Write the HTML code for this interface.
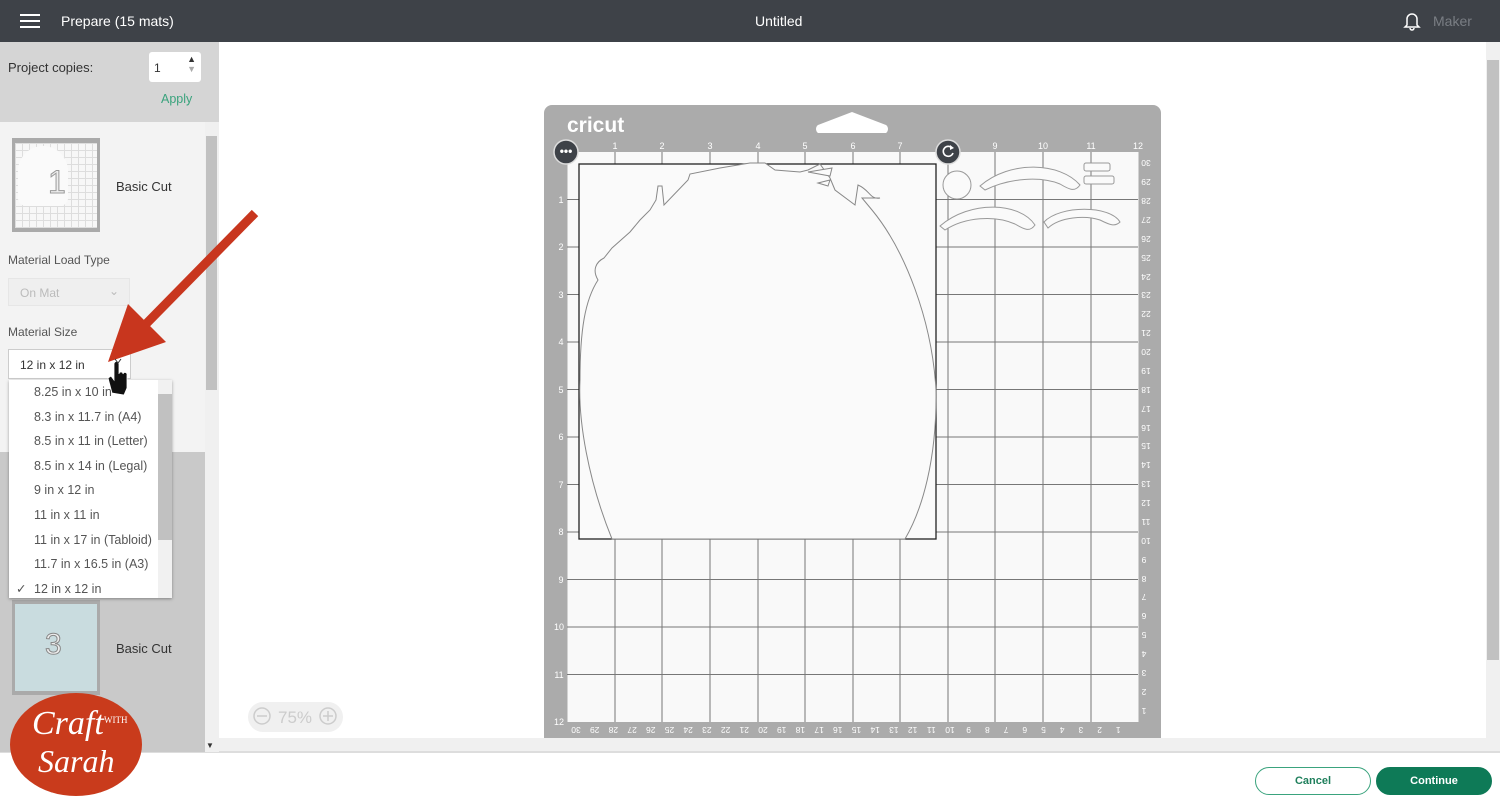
<!DOCTYPE html>
<html><head><meta charset="utf-8"><style>
*{margin:0;padding:0;box-sizing:border-box}
body{width:1500px;height:806px;overflow:hidden;font-family:"Liberation Sans",sans-serif;background:#fff;position:relative}
.top{position:absolute;left:0;top:0;width:1500px;height:42px;background:#3e4248;color:#fff}
.top .t{position:absolute;top:13px;font-size:14px}
.side{position:absolute;left:0;top:42px;width:219px;height:710px;background:#c9c9c9}
.abs{position:absolute}
.dd div{height:24.6px;line-height:24.6px;padding-left:25px;font-size:12.5px;color:#555}
.btn{position:absolute;top:767px;height:28px;border-radius:14px;font-size:11px;font-weight:bold;text-align:center;line-height:26px}
</style></head><body>
<div class="top">
 <div class="abs" style="left:20px;top:14px;width:20px;height:2px;background:#fff"></div>
 <div class="abs" style="left:20px;top:20px;width:20px;height:2px;background:#fff"></div>
 <div class="abs" style="left:20px;top:26px;width:20px;height:2px;background:#fff"></div>
 <div class="t" style="left:61px">Prepare (15 mats)</div>
 <div class="t" style="left:755px">Untitled</div>
 <svg class="abs" style="left:1403px;top:11px" width="18" height="20" viewBox="0 0 18 20"><path d="M4 14 V8 a5 5 0 0 1 10 0 V14 L16 16 H2 Z M7 17 a2 2 0 0 0 4 0" fill="none" stroke="#fff" stroke-width="1.5"/></svg>
 <div class="t" style="left:1433px;color:#7a7e84">Maker</div>
</div>
<div class="side">
 <div class="abs" style="left:0;top:0;width:219px;height:80px;background:#d5d5d5"></div>
 <div class="abs" style="left:8px;top:18px;font-size:13px;color:#333">Project copies:</div>
 <div class="abs" style="left:149px;top:10px;width:52px;height:30px;background:#fff;border-radius:3px;font-size:12px;padding:9px 0 0 5px;color:#333">1<span style="position:absolute;right:5px;top:2px;font-size:9px">▲<br><span style="color:#aaa">▼</span></span></div>
 <div class="abs" style="left:161px;top:50px;font-size:12.5px;color:#3aa37d">Apply</div>
 <div class="abs" style="left:0;top:80px;width:205px;height:330px;background:#f3f3f3"></div>
 <div class="abs" style="left:205px;top:80px;width:14px;height:630px;background:#f0f0f0"></div>
 <div class="abs" style="left:206px;top:94px;width:11px;height:254px;background:#c1c1c1"></div>
 <div class="abs" style="left:12px;top:96px;width:88px;height:94px;background:#aaa"></div>
 <div class="abs" style="left:15px;top:101px;width:82px;height:85px;background:#f7f7f7;background-image:linear-gradient(#ddd 1px,transparent 1px),linear-gradient(90deg,#ddd 1px,transparent 1px);background-size:7px 7px"></div>
 <div class="abs" style="left:18px;top:104px;width:50px;height:60px;background:#fafafa;border-radius:25px 25px 8px 8px"></div>
 <div class="abs" style="left:48px;top:122px;font-size:32px;color:#eee;-webkit-text-stroke:1px #999">1</div>
 <div class="abs" style="left:116px;top:137px;font-size:13px;color:#333">Basic Cut</div>
 <div class="abs" style="left:8px;top:211px;font-size:12px;color:#555">Material Load Type</div>
 <div class="abs" style="left:8px;top:236px;width:122px;height:28px;background:#efefef;border:1px solid #e6e6e6;font-size:12px;color:#bbb;padding:7px 0 0 11px">On Mat<span style="position:absolute;right:10px;top:5px">⌄</span></div>
 <div class="abs" style="left:8px;top:283px;font-size:12px;color:#555">Material Size</div>
 <div class="abs" style="left:8px;top:307px;width:123px;height:30px;background:#fff;border:1px solid #ccc;font-size:12px;color:#333;padding:8px 0 0 11px">12 in x 12 in</div>
 <div class="abs" style="left:12px;top:558px;width:88px;height:95px;background:#aaa"></div>
 <div class="abs" style="left:15px;top:562px;width:82px;height:87px;background:#c9dcdf"></div>
 <div class="abs" style="left:45px;top:586px;font-size:30px;color:#eee;-webkit-text-stroke:1px #888">3</div>
 <div class="abs" style="left:116px;top:599px;font-size:13px;color:#333">Basic Cut</div>
 <div class="abs" style="left:156px;top:469px;font-size:13px;color:#333">t</div>
 <div class="abs" style="left:206px;top:699px;font-size:8px;color:#333">▼</div>
</div>
<div class="abs dd" style="left:9px;top:380px;width:163px;height:218px;background:#fff;box-shadow:0 1px 3px rgba(0,0,0,.35);overflow:hidden">
 <div>8.25 in x 10 in</div><div>8.3 in x 11.7 in (A4)</div><div>8.5 in x 11 in (Letter)</div><div>8.5 in x 14 in (Legal)</div><div>9 in x 12 in</div><div>11 in x 11 in</div><div>11 in x 17 in (Tabloid)</div><div>11.7 in x 16.5 in (A3)</div><div style="position:relative"><span style="position:absolute;left:7px">✓</span>12 in x 12 in</div>
 <div class="abs" style="left:149px;top:0;width:14px;height:218px;background:#f1f1f1"></div>
 <div class="abs" style="left:149px;top:14px;width:12px;height:146px;background:#c1c1c1"></div>
</div>
<!-- canvas -->
<div class="abs" style="left:219px;top:42px;width:1267px;height:696px;background:#fff"></div>
<svg class="abs" style="left:0;top:0" width="1500" height="806" viewBox="0 0 1500 806">
 <path d="M544 738 V113 a8 8 0 0 1 8 -8 H1153 a8 8 0 0 1 8 8 V738 Z" fill="#ababab"/>
 <path d="M818 133 h68 a5 5 0 0 0 0 -8 L852 112 L818 125 a5 5 0 0 0 0 8 Z" fill="#fff"/>
 <text x="567" y="132" font-size="21" font-weight="bold" fill="#fff" font-family="Liberation Sans">cricut</text>
 <rect x="567.5" y="152" width="571" height="570" fill="#f9f9f9"/>
 <g stroke="#777" stroke-width="1">
  <path d="M615 152V722M662 152V722M710 152V722M758 152V722M805 152V722M853 152V722M900 152V722M948 152V722M995 152V722M1043 152V722M1091 152V722"/>
  <path d="M567 199.5H1138M567 247H1138M567 294.5H1138M567 342H1138M567 389.5H1138M567 437H1138M567 484.5H1138M567 532H1138M567 579.5H1138M567 627H1138M567 674.5H1138"/>
 </g>
 <rect x="579" y="164" width="357" height="375" fill="#fafafa" stroke="#222" stroke-width="1.3"/>
 <g stroke="#777" stroke-width="1"><path d="M948 164V539M995 164V539"/></g>
 <path d="M612 539 C588 480 578 420 580 380 C580 330 585 300 598 280 C592 270 596 262 604 258 L612 248 L630 232 L640 220 L650 210 L656 200 L658 186 L662 186 L664 205 L688 180 L690 174 L720 168 L750 163 L765 163 L775 170 L800 172 L808 170 L820 164 L830 178 L835 190 L855 205 L858 185 C870 190 870 200 880 198 L862 198 L872 210 C905 250 932 320 936 390 C937 460 922 510 905 539 Z" fill="#fafafa" stroke="#888" stroke-width="1"/>
 <path d="M808 172 L832 168 L830 176 Z M818 183 L830 180 L828 186 Z" fill="#fafafa" stroke="#888"/>
 <g fill="#fafafa" stroke="#999">
  <circle cx="957" cy="185" r="14"/>
  <path d="M980 186 C1010 160 1060 162 1080 185 C1075 192 1070 190 1060 184 C1040 176 1010 178 985 190 Z"/>
  <path d="M940 226 C970 200 1020 202 1035 225 C1030 232 1025 230 1015 224 C995 215 965 217 945 230 Z"/>
  <path d="M1044 222 C1060 205 1110 205 1120 222 C1115 227 1110 225 1100 220 C1085 215 1060 217 1048 228 Z"/>
  <rect x="1084" y="163" width="26" height="8" rx="2"/><rect x="1084" y="176" width="30" height="8" rx="2"/>
 </g>
 <circle cx="566" cy="152" r="12" fill="#3e4248" stroke="#ddd" stroke-width="1.5"/>
 <text x="566" y="155" font-size="12" fill="#fff" text-anchor="middle" font-weight="bold">•••</text>
 <circle cx="948" cy="152" r="12" fill="#3e4248" stroke="#ddd" stroke-width="1.5"/>
 <path d="M952 148 a5 5 0 1 0 1 5" fill="none" stroke="#fff" stroke-width="1.6"/><path d="M950 145 l4 3 l-4 2 Z" fill="#fff"/>
 <g font-size="9" fill="#fff" text-anchor="middle" font-family="Liberation Sans">
  <text x="615" y="149">1</text><text x="662" y="149">2</text><text x="710" y="149">3</text><text x="758" y="149">4</text><text x="805" y="149">5</text><text x="853" y="149">6</text><text x="900" y="149">7</text><text x="995" y="149">9</text><text x="1043" y="149">10</text><text x="1091" y="149">11</text><text x="1138" y="149">12</text>
  <text x="561" y="203">1</text><text x="561" y="250">2</text><text x="561" y="298">3</text><text x="561" y="345">4</text><text x="561" y="393">5</text><text x="561" y="440">6</text><text x="561" y="488">7</text><text x="561" y="535">8</text><text x="561" y="583">9</text><text x="559" y="630">10</text><text x="559" y="678">11</text><text x="559" y="725">12</text>
 </g>
 <g font-size="8.5" fill="#fff" text-anchor="middle" font-family="Liberation Sans">
  <g transform="translate(1146,160) rotate(180)"><text>30</text></g><g transform="translate(1146,179) rotate(180)"><text>29</text></g><g transform="translate(1146,198) rotate(180)"><text>28</text></g><g transform="translate(1146,217) rotate(180)"><text>27</text></g><g transform="translate(1146,236) rotate(180)"><text>26</text></g><g transform="translate(1146,255) rotate(180)"><text>25</text></g><g transform="translate(1146,274) rotate(180)"><text>24</text></g><g transform="translate(1146,292) rotate(180)"><text>23</text></g><g transform="translate(1146,311) rotate(180)"><text>22</text></g><g transform="translate(1146,330) rotate(180)"><text>21</text></g><g transform="translate(1146,349) rotate(180)"><text>20</text></g><g transform="translate(1146,368) rotate(180)"><text>19</text></g><g transform="translate(1146,387) rotate(180)"><text>18</text></g><g transform="translate(1146,406) rotate(180)"><text>17</text></g><g transform="translate(1146,425) rotate(180)"><text>16</text></g><g transform="translate(1146,443) rotate(180)"><text>15</text></g><g transform="translate(1146,462) rotate(180)"><text>14</text></g><g transform="translate(1146,481) rotate(180)"><text>13</text></g><g transform="translate(1146,500) rotate(180)"><text>12</text></g><g transform="translate(1146,519) rotate(180)"><text>11</text></g><g transform="translate(1146,538) rotate(180)"><text>10</text></g><g transform="translate(1144,557) rotate(180)"><text>9</text></g><g transform="translate(1144,576) rotate(180)"><text>8</text></g><g transform="translate(1144,594) rotate(180)"><text>7</text></g><g transform="translate(1144,613) rotate(180)"><text>6</text></g><g transform="translate(1144,632) rotate(180)"><text>5</text></g><g transform="translate(1144,651) rotate(180)"><text>4</text></g><g transform="translate(1144,670) rotate(180)"><text>3</text></g><g transform="translate(1144,689) rotate(180)"><text>2</text></g><g transform="translate(1144,708) rotate(180)"><text>1</text></g>
 </g>
 <g font-size="8.5" fill="#fff" text-anchor="middle" font-family="Liberation Sans">
  <g transform="translate(576,727) rotate(180)"><text>30</text></g><g transform="translate(594.7,727) rotate(180)"><text>29</text></g><g transform="translate(613.4,727) rotate(180)"><text>28</text></g><g transform="translate(632.1,727) rotate(180)"><text>27</text></g><g transform="translate(650.8,727) rotate(180)"><text>26</text></g><g transform="translate(669.5,727) rotate(180)"><text>25</text></g><g transform="translate(688.2,727) rotate(180)"><text>24</text></g><g transform="translate(706.9,727) rotate(180)"><text>23</text></g><g transform="translate(725.6,727) rotate(180)"><text>22</text></g><g transform="translate(744.3,727) rotate(180)"><text>21</text></g><g transform="translate(763,727) rotate(180)"><text>20</text></g><g transform="translate(781.7,727) rotate(180)"><text>19</text></g><g transform="translate(800.4,727) rotate(180)"><text>18</text></g><g transform="translate(819.1,727) rotate(180)"><text>17</text></g><g transform="translate(837.8,727) rotate(180)"><text>16</text></g><g transform="translate(856.5,727) rotate(180)"><text>15</text></g><g transform="translate(875.2,727) rotate(180)"><text>14</text></g><g transform="translate(893.9,727) rotate(180)"><text>13</text></g><g transform="translate(912.6,727) rotate(180)"><text>12</text></g><g transform="translate(931.3,727) rotate(180)"><text>11</text></g><g transform="translate(950,727) rotate(180)"><text>10</text></g><g transform="translate(968.7,727) rotate(180)"><text>9</text></g><g transform="translate(987.4,727) rotate(180)"><text>8</text></g><g transform="translate(1006.1,727) rotate(180)"><text>7</text></g><g transform="translate(1024.8,727) rotate(180)"><text>6</text></g><g transform="translate(1043.5,727) rotate(180)"><text>5</text></g><g transform="translate(1062.2,727) rotate(180)"><text>4</text></g><g transform="translate(1080.9,727) rotate(180)"><text>3</text></g><g transform="translate(1099.6,727) rotate(180)"><text>2</text></g><g transform="translate(1118.3,727) rotate(180)"><text>1</text></g>
 </g>
 <rect x="248" y="702" width="95" height="30" rx="15" fill="#f0f0f0"/>
 <circle cx="262" cy="716" r="8" fill="none" stroke="#ccc" stroke-width="1.5"/><path d="M257 716h10" stroke="#ccc" stroke-width="1.5"/>
 <circle cx="328" cy="716" r="8" fill="none" stroke="#ccc" stroke-width="1.5"/><path d="M323 716h10M328 711v10" stroke="#ccc" stroke-width="1.5"/>
 <text x="295" y="723" font-size="17" fill="#ccc" text-anchor="middle" font-family="Liberation Sans">75%</text>
 <!-- arrow -->
 <line x1="255" y1="213" x2="145" y2="325" stroke="#c8361e" stroke-width="9"/>
 <polygon points="108,362 166,342 128,304" fill="#c8361e"/>
 <!-- hand cursor -->
 <path d="M112 393 L108 378 L111 376 L114 380 V364 a2.5 2.5 0 0 1 5 0 V374 a2 2 0 0 1 4 0 a2 2 0 0 1 4 1 V388 L124 395 Z" fill="#111" stroke="#fff" stroke-width="0.8"/>
 <path d="M115 359 l3 4 l3 -4" fill="none" stroke="#333" stroke-width="1"/>
</svg>
<div class="abs" style="left:1486px;top:42px;width:14px;height:710px;background:#f0f0f0"></div>
<div class="abs" style="left:1487px;top:60px;width:12px;height:600px;background:#c1c1c1"></div>
<div class="abs" style="left:219px;top:738px;width:1281px;height:14px;background:#f0f0f0;border-bottom:1px solid #ddd"></div>
<div class="abs" style="left:0;top:752px;width:1500px;height:1px;background:#ddd"></div>
<div class="btn" style="left:1255px;width:116px;border:1px solid #3aa37d;color:#1f7f5c;background:#fff">Cancel</div>
<div class="btn" style="left:1376px;width:116px;background:#0e7a57;color:#fff;border:1px solid #0e7a57">Continue</div>
<div class="abs" style="left:10px;top:693px;width:132px;height:103px;border-radius:50%;background:#c93b1c;color:#fff;font-family:'Liberation Serif',serif;font-style:italic;text-align:center">
 <div style="position:absolute;left:22px;top:12px;font-size:34px">Craft</div>
 <div style="position:absolute;left:94px;top:22px;font-size:9px;font-style:normal">WITH</div>
 <div style="position:absolute;left:28px;top:50px;font-size:32px">Sarah</div>
</div>
</body></html>
